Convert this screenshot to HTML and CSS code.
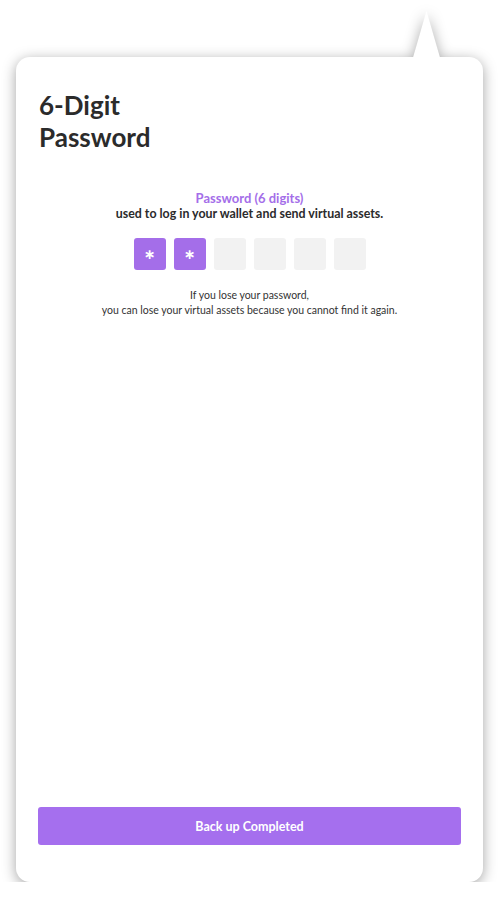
FILE: index.html
```html
<!DOCTYPE html>
<html>
<head>
<meta charset="utf-8">
<link rel="stylesheet" href="styles.css">
</head>
<body>
<div class="stage">
  <div class="popup">
    <div class="pointer"></div>
    <div class="card">
      <h1 class="title">6-Digit<br>Password</h1>
      <div class="content">
        <p class="label">Password (6 digits)</p>
        <p class="sub">used to log in your wallet and send virtual assets.</p>
        <div class="pins">
          <div class="pin filled">∗</div>
          <div class="pin filled">∗</div>
          <div class="pin"></div>
          <div class="pin"></div>
          <div class="pin"></div>
          <div class="pin"></div>
        </div>
        <p class="warn">If you lose your password,<br>you can lose your virtual assets because you cannot find it again.</p>
      </div>
      <button class="btn">Back up Completed</button>
    </div>
  </div>
</div>
</body>
</html>
```
FILE: styles.css
```css
html, body {
  margin: 0;
  padding: 0;
  background: #ffffff;
}
body {
  font-family: "Lato", "Noto Sans", sans-serif;
  color: #2b2b2b;
}
.stage {
  padding: 57px 17px 0 16px;
}
.popup {
  position: relative;
  width: 467px;
  filter: drop-shadow(0 3px 7px rgba(0, 0, 0, 0.36));
}
.pointer {
  position: absolute;
  left: 396px;
  top: -46px;
  width: 29px;
  height: 50px;
  background: #fff;
  clip-path: polygon(50% 0, 100% 100%, 0 100%);
}
.card {
  position: relative;
  background: #fff;
  border-radius: 14px;
  height: 825px;
  box-sizing: border-box;
  padding: 32px 22px 37px 22px;
  display: flex;
  flex-direction: column;
}
.title {
  margin: 0 0 0 1px;
  font-size: 26px;
  line-height: 32px;
  font-weight: 700;
  color: #2b2b2b;
}
.content {
  flex: 1;
  display: flex;
  flex-direction: column;
  align-items: center;
  padding-top: 37px;
}
.label {
  margin: 0;
  font-size: 13px;
  line-height: 16px;
  font-weight: 700;
  color: #a46ee9;
}
.sub {
  margin: 0;
  font-size: 12.4px;
  line-height: 16px;
  font-weight: 700;
  color: #2b2b2b;
}
.pins {
  display: flex;
  gap: 8px;
  margin-top: 16px;
}
.pin {
  width: 32px;
  height: 32px;
  border-radius: 3px;
  background: #f2f2f2;
  display: flex;
  align-items: center;
  justify-content: center;
  color: #fff;
  font-family: "DejaVu Sans", sans-serif;
  font-weight: 700;
  font-size: 14px;
  line-height: 1;
}
.pin.filled {
  background: #a46ee9;
}
.warn {
  margin: 18px 0 0;
  font-size: 10.5px;
  line-height: 15px;
  text-align: center;
  color: #333;
}
.btn {
  height: 38px;
  border: 0;
  border-radius: 3px;
  background: #a56fee;
  color: #fff;
  font-family: inherit;
  font-size: 12.5px;
  font-weight: 700;
}
```
